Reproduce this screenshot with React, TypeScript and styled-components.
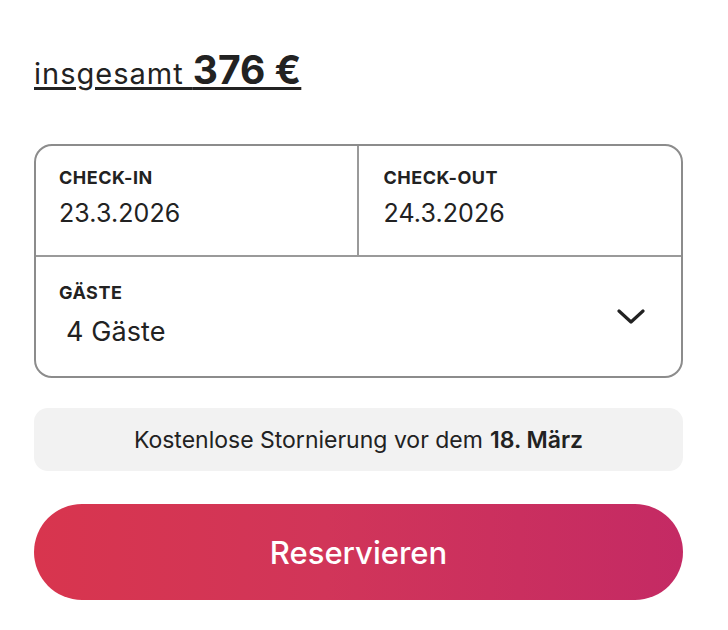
import styled, { createGlobalStyle } from 'styled-components';

const GlobalStyle = createGlobalStyle`
  * {
    box-sizing: border-box;
  }

  body {
    margin: 0;
    background: #fff;
    color: #222;
    font-family: Inter, "Noto Sans", "Liberation Sans", sans-serif;
  }
`;

export default function App() {
  return (
    <>
      <GlobalStyle />
      <Page>
        <Total>
          insgesamt <Amount>376 €</Amount>
        </Total>

        <Picker>
          <DateRow>
            <Field $divider>
              <Label>CHECK-IN</Label>
              <Value>23.3.2026</Value>
            </Field>
            <Field>
              <Label>CHECK-OUT</Label>
              <Value>24.3.2026</Value>
            </Field>
          </DateRow>
          <GuestRow>
            <GuestInfo>
              <Label>GÄSTE</Label>
              <GuestValue>4 Gäste</GuestValue>
            </GuestInfo>
            <Chevron width="28" height="16" viewBox="0 0 28 16" aria-hidden="true">
              <polyline points="2,2 14,13 26,2" />
            </Chevron>
          </GuestRow>
        </Picker>

        <Notice>
          Kostenlose Stornierung vor dem <strong>18. März</strong>
        </Notice>

        <ReserveButton type="button">Reservieren</ReserveButton>
      </Page>
    </>
  );
}

const Page = styled.main`
  display: flex;
  flex-direction: column;
  width: 649px;
  margin-left: 34px;
  padding-top: 50px;
`;

const Total = styled.h2`
  margin: 0;
  font-size: 29px;
  font-weight: 400;
  line-height: 48px;
  letter-spacing: 1px;
  color: #222;
  text-decoration: underline;
  text-decoration-thickness: 3px;
  text-underline-offset: 3px;
`;

const Amount = styled.span`
  font-size: 39px;
  font-weight: 700;
  line-height: 1;
  letter-spacing: 0;
`;

const Picker = styled.div`
  margin-top: 46px;
  border: 2px solid #8c8c8c;
  border-radius: 18px;
  overflow: hidden;
`;

const DateRow = styled.div`
  display: grid;
  grid-template-columns: 1fr 1fr;
  height: 111px;
  border-bottom: 2px solid #9a9a9a;
`;

const Field = styled.div<{ $divider?: boolean }>`
  display: flex;
  flex-direction: column;
  padding: ${({ $divider }) => ($divider ? '21px 0 0 23px' : '21px 0 0 25px')};
  border-right: ${({ $divider }) => ($divider ? '2px solid #9a9a9a' : 'none')};
`;

const Label = styled.div`
  font-size: 18px;
  font-weight: 700;
  line-height: 22px;
  letter-spacing: 0.5px;
  color: #222;
`;

const Value = styled.div`
  margin-top: 8px;
  font-size: 25px;
  line-height: 32px;
  letter-spacing: 0.1px;
  color: #222;
`;

const GuestRow = styled.div`
  display: flex;
  align-items: center;
  justify-content: space-between;
  height: 119px;
  padding: 0 36px 0 23px;
`;

const GuestInfo = styled.div`
  display: flex;
  flex-direction: column;
  padding-bottom: 4px;
`;

const GuestValue = styled(Value)`
  margin-top: 12px;
  padding-left: 7px;
  font-size: 27px;
`;

const Chevron = styled.svg`
  fill: none;
  stroke: #222;
  stroke-width: 3.2;
  stroke-linecap: round;
  stroke-linejoin: round;
`;

const Notice = styled.div`
  display: flex;
  align-items: center;
  justify-content: center;
  gap: 7px;
  height: 63px;
  margin-top: 30px;
  border-radius: 14px;
  background: #f2f2f2;
  font-size: 23px;
  color: #222;

  strong {
    font-weight: 600;
  }
`;

const ReserveButton = styled.button`
  height: 96px;
  margin-top: 33px;
  border: none;
  border-radius: 48px;
  background: linear-gradient(90deg, #d8354e 0%, #d13559 45%, #c42a64 100%);
  color: #fff;
  font-family: inherit;
  font-size: 31px;
  font-weight: 500;
  cursor: pointer;
`;
